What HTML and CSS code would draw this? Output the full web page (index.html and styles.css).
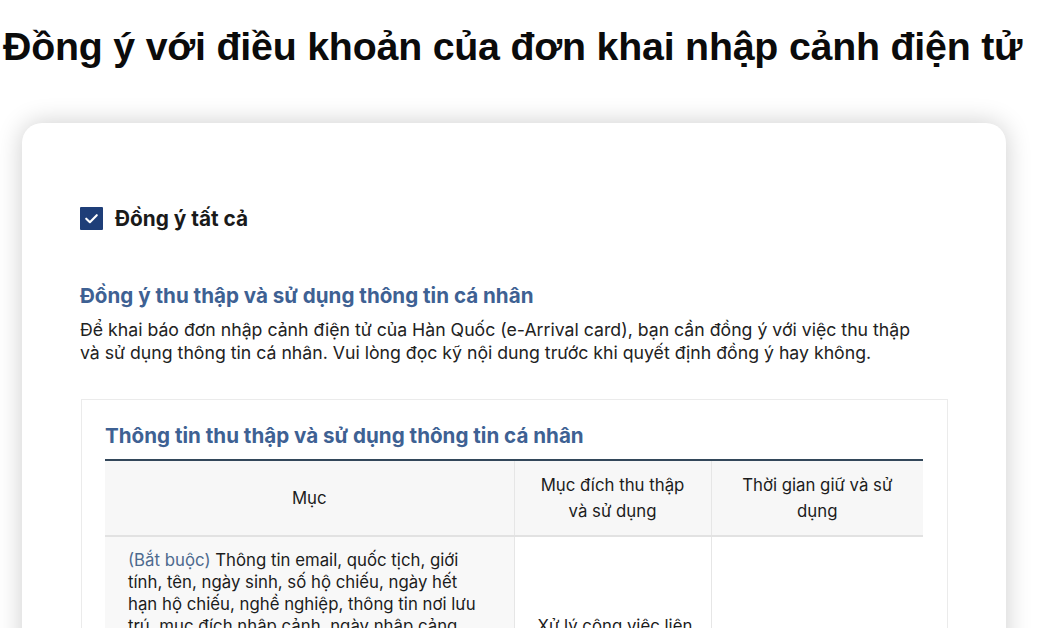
FILE: index.html
```html
<!DOCTYPE html>
<html lang="vi">
<head>
<meta charset="utf-8">
<title>e-Arrival</title>
<link rel="stylesheet" href="styles.css">
</head>
<body>
<h1 class="page-title">Đồng ý với điều khoản của đơn khai nhập cảnh điện tử</h1>
<main class="card">
  <label class="agree-all">
    <span class="checkbox">
      <svg viewBox="0 0 24 24" width="23" height="23"><path d="M6.5 12.2 L10.3 15.8 L17.5 8.6" fill="none" stroke="#ffffff" stroke-width="2.2" stroke-linecap="round" stroke-linejoin="round"/></svg>
    </span>
    <span class="agree-label">Đồng ý tất cả</span>
  </label>

  <section class="consent">
    <h2 class="section-title">Đồng ý thu thập và sử dụng thông tin cá nhân</h2>
    <p class="section-desc">Để khai báo đơn nhập cảnh điện tử của Hàn Quốc (e-Arrival card), bạn cần đồng ý với việc thu thập và sử dụng thông tin cá nhân. Vui lòng đọc kỹ nội dung trước khi quyết định đồng ý hay không.</p>

    <div class="info-box">
      <h3 class="box-title">Thông tin thu thập và sử dụng thông tin cá nhân</h3>
      <table class="info-table">
        <colgroup>
          <col class="c1"><col class="c2"><col class="c3">
        </colgroup>
        <thead>
          <tr>
            <th>Mục</th>
            <th>Mục đích thu thập và sử dụng</th>
            <th>Thời gian giữ và sử dụng</th>
          </tr>
        </thead>
        <tbody>
          <tr>
            <td class="item"><span class="req">(Bắt buộc)</span> Thông tin email, quốc tịch, giới tính, tên, ngày sinh, số hộ chiếu, ngày hết hạn hộ chiếu, nghề nghiệp, thông tin nơi lưu trú, mục đích nhập cảnh, ngày nhập cảng, thông tin chuyến bay, cảng khởi hành, thông tin liên lạc tại Hàn Quốc, địa chỉ lưu trú tại Hàn Quốc, thông tin về tình trạng sức khỏe, lịch sử đi lại trong thời gian gần đây, số điện thoại liên lạc khẩn cấp của người khai báo</td>
            <td class="purpose">Xử lý công việc liên quan đến đơn khai nhập cảnh điện tử</td>
            <td class="period"></td>
          </tr>
        </tbody>
      </table>
    </div>
  </section>
</main>
</body>
</html>
```

FILE: styles.css
```css
* { box-sizing: border-box; }

html, body {
  margin: 0;
  padding: 0;
  background: #ffffff;
}

body {
  font-family: Inter, "Noto Sans", sans-serif;
  color: #1c1c1c;
  overflow: hidden;
  height: 628px;
}

.page-title {
  margin: 0;
  padding: 22px 0 0 3px;
  font-family: "Liberation Sans", Arial, sans-serif;
  font-weight: 700;
  font-size: 39.3px;
  line-height: 48px;
  color: #0b0b0b;
  white-space: nowrap;
  letter-spacing: -0.2px;
}

.card {
  margin: 53px 0 0 22px;
  width: 984px;
  background: #ffffff;
  border-radius: 20px;
  box-shadow: 0 0 26px rgba(0, 0, 0, 0.2);
  padding: 83px 58px 40px 58px;
  min-height: 700px;
}

.agree-all {
  display: flex;
  align-items: center;
  gap: 12px;
}

.checkbox {
  width: 23px;
  height: 23px;
  background: #1e3e78;
  border-radius: 1px;
  display: flex;
}

.agree-label {
  font-size: 20.8px;
  font-weight: 700;
  color: #1a1a1a;
}

.consent {
  margin-top: 52px;
}

.section-title {
  margin: 0;
  font-size: 20.6px;
  font-weight: 700;
  line-height: 26px;
  color: #3e6193;
}

.section-desc {
  margin: 9px 0 0 0;
  font-size: 17.7px;
  line-height: 23px;
  color: #222222;
  width: 836px;
}

.info-box {
  margin-top: 35px;
  margin-left: 1px;
  width: 867px;
  border: 1px solid #ebebeb;
  padding: 23px 23px 0 23px;
}

.box-title {
  margin: 0 0 10px 0;
  font-size: 20.6px;
  font-weight: 700;
  line-height: 26px;
  color: #3e6193;
}

.info-table {
  width: 818px;
  border-collapse: collapse;
  table-layout: fixed;
  border-top: 2px solid #33475a;
  font-size: 16.8px;
}

.c1 { width: 409px; }
.c2 { width: 197px; }
.c3 { width: 212px; }

.info-table th {
  background: #f7f7f7;
  font-weight: 400;
  color: #1c1c1c;
  line-height: 26px;
  height: 76px;
  padding: 0 18px;
  text-align: center;
  vertical-align: middle;
  border-left: 1px solid #e6e6e6;
  border-bottom: 2px solid #e2e2e2;
}

.info-table th:first-child,
.info-table td:first-child {
  border-left: none;
}

.info-table td {
  line-height: 22px;
  vertical-align: middle;
  border-left: 1px solid #e6e6e6;
  border-bottom: 1px solid #e6e6e6;
  color: #1c1c1c;
}

.info-table td.item {
  background: #f8f8f8;
  padding: 12px 24px 12px 23px;
  vertical-align: top;
}

.info-table td.purpose {
  padding: 12px 12px 12px 23px;
}

.req {
  color: #4d6a8e;
}
```
